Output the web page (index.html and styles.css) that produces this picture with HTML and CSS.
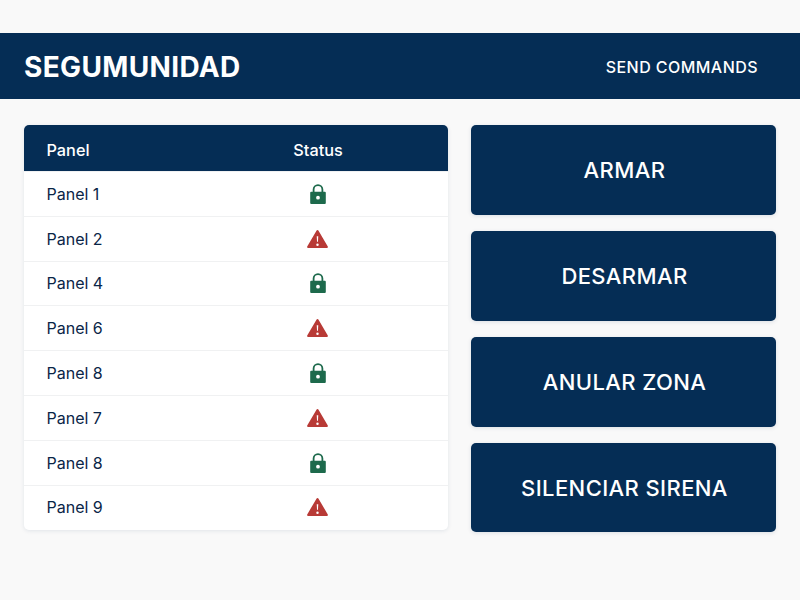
FILE: index.html
```html
<!DOCTYPE html>
<html lang="es">
<head>
<meta charset="utf-8">
<title>Segumunidad</title>
<link rel="stylesheet" href="styles.css">
</head>
<body>
<svg class="defs" width="0" height="0" aria-hidden="true">
  <symbol id="lock" viewBox="0 0 16 20">
    <path class="lock-bow" d="M3.600 9V5.600a4.400 4.400 0 0 1 8.800 0V9"/>
    <path class="lock-body" fill-rule="evenodd" d="M1.200 7.800h13.600a1 1 0 0 1 1 1V19a1 1 0 0 1-1 1H1.200a1 1 0 0 1-1-1V8.800a1 1 0 0 1 1-1ZM8 11.800a1.900 1.900 0 1 0 0 3.800 1.900 1.900 0 0 0 0-3.800Z"/>
  </symbol>
  <symbol id="warn" viewBox="0 0 22 19">
    <path class="warn-body" fill-rule="evenodd" d="M9.900.700a1.300 1.300 0 0 1 2.200 0l9.600 16.400a1.200 1.200 0 0 1-1.100 1.900H1.400a1.200 1.200 0 0 1-1.100-1.900ZM10.200 6.500l.3 6h1l.3-6ZM11 14.200a1.300 1.300 0 1 0 0 2.600 1.300 1.300 0 0 0 0-2.600Z"/>
  </symbol>
</svg>
<header class="topbar">
  <h1 class="brand">SEGUMUNIDAD</h1>
  <a class="topbar-link">SEND COMMANDS</a>
</header>
<main class="content">
  <section class="panel-card">
    <div class="row row-head"><span class="col-name">Panel</span><span class="col-status">Status</span></div>
    <div class="row"><span class="col-name">Panel 1</span><span class="col-status"><svg class="icon-lock"><use href="#lock"/></svg></span></div>
    <div class="row"><span class="col-name">Panel 2</span><span class="col-status"><svg class="icon-warn"><use href="#warn"/></svg></span></div>
    <div class="row"><span class="col-name">Panel 4</span><span class="col-status"><svg class="icon-lock"><use href="#lock"/></svg></span></div>
    <div class="row"><span class="col-name">Panel 6</span><span class="col-status"><svg class="icon-warn"><use href="#warn"/></svg></span></div>
    <div class="row"><span class="col-name">Panel 8</span><span class="col-status"><svg class="icon-lock"><use href="#lock"/></svg></span></div>
    <div class="row"><span class="col-name">Panel 7</span><span class="col-status"><svg class="icon-warn"><use href="#warn"/></svg></span></div>
    <div class="row"><span class="col-name">Panel 8</span><span class="col-status"><svg class="icon-lock"><use href="#lock"/></svg></span></div>
    <div class="row"><span class="col-name">Panel 9</span><span class="col-status"><svg class="icon-warn"><use href="#warn"/></svg></span></div>
  </section>
  <section class="commands">
    <button class="cmd">ARMAR</button>
    <button class="cmd">DESARMAR</button>
    <button class="cmd">ANULAR ZONA</button>
    <button class="cmd">SILENCIAR SIRENA</button>
  </section>
</main>
</body>
</html>
```
FILE: styles.css
```css
* { box-sizing: border-box; }
html, body { margin: 0; height: 100%; }
body {
  background: #f9f9f9;
  font-family: Inter, "Liberation Sans", sans-serif;
  padding-top: 33px;
  overflow: hidden;
}
.defs { position: absolute; }
.topbar {
  height: 66px;
  background: #052d55;
  color: #fff;
  display: flex;
  align-items: center;
  justify-content: space-between;
  padding: 2px 42px 0 24px;
}
.brand { margin: 0; font-size: 28px; font-weight: 700; letter-spacing: 0.35px; }
.topbar-link { font-size: 16px; font-weight: 500; letter-spacing: 0.45px; }
.content {
  display: flex;
  gap: 23px;
  padding: 26px 24px 0;
}
.panel-card {
  width: 424px;
  height: 405px;
  background: #fff;
  border-radius: 5px;
  overflow: hidden;
  box-shadow: 0 1px 4px rgba(5, 45, 85, 0.1);
  display: flex;
  flex-direction: column;
}
.row {
  flex: 0 0 44.800px;
  display: flex;
  align-items: center;
  font-size: 16px;
  color: #0a2547;
  border-top: 1px solid #f0f1f2;
  padding-left: 22.500px;
}
.row-head {
  flex: 0 0 46px;
  background: #052d55;
  color: #fff;
  font-weight: 500;
  font-size: 16.300px;
  border-top: 0;
  padding-top: 3px;
}
.col-name { width: 200px; }
.col-status { width: 142px; display: flex; justify-content: center; }
.row-head .col-status { padding-left: 1px; }
.icon-lock { width: 16px; height: 20px; }
.icon-warn { width: 21px; height: 18px; }
.lock-bow { fill: none; stroke: #1d6a4c; stroke-width: 1.800px; }
.lock-body { fill: #1d6a4c; }
.warn-body { fill: #b83a36; }
.commands {
  width: 305px;
  display: flex;
  flex-direction: column;
  gap: 16px;
}
.cmd {
  height: 90px;
  border: 0;
  border-radius: 5px;
  padding: 0 0 0 2px;
  background: #052d55;
  color: #fff;
  font-family: inherit;
  font-size: 22px;
  font-weight: 500;
  letter-spacing: 0.4px;
  box-shadow: 0 1px 4px rgba(5, 45, 85, 0.12);
}
.cmd:last-child { height: 89px; }
```
